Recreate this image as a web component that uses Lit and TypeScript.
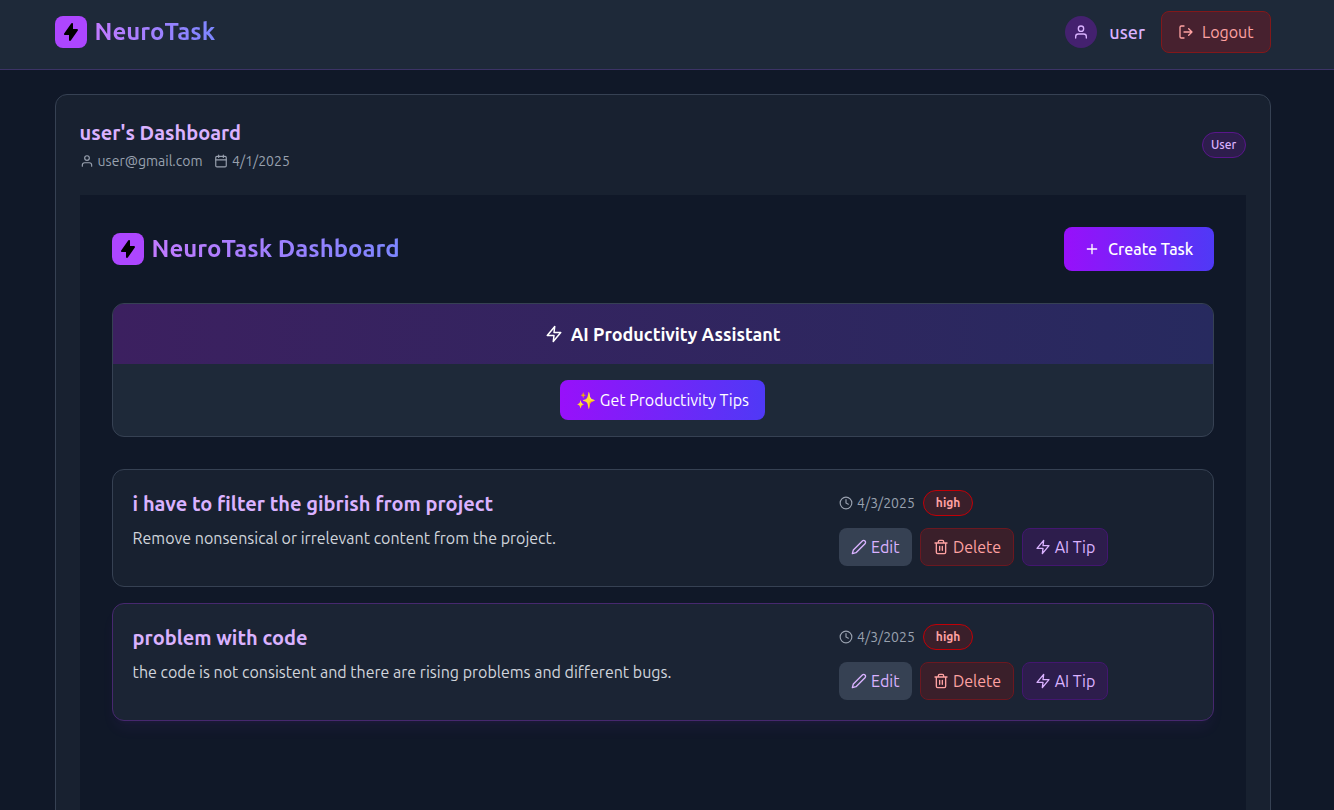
import { LitElement, html, css, svg } from "lit";
import { customElement, property } from "lit/decorators.js";

const icons: Record<string, unknown> = {
  user: svg`<path d="M20 21v-2a4 4 0 0 0-4-4H8a4 4 0 0 0-4 4v2"/><circle cx="12" cy="7" r="4"/>`,
  calendar: svg`<rect x="3" y="4" width="18" height="18" rx="2"/><path d="M16 2v4M8 2v4M3 10h18"/>`,
  logout: svg`<path d="M9 21H5a2 2 0 0 1-2-2V5a2 2 0 0 1 2-2h4M16 17l5-5-5-5M21 12H9"/>`,
  plus: svg`<path d="M12 5v14M5 12h14"/>`,
  zap: svg`<path d="M13 2 3 14h9l-1 8 10-12h-9l1-8z"/>`,
  clock: svg`<circle cx="12" cy="12" r="10"/><path d="M12 6v6l4 2"/>`,
  edit: svg`<path d="M17 3a2.828 2.828 0 1 1 4 4L7.500 20.500 2 22l1.500-5.500L17 3z"/>`,
  trash: svg`<path d="M3 6h18M19 6v14a2 2 0 0 1-2 2H7a2 2 0 0 1-2-2V6m3 0V4a2 2 0 0 1 2-2h4a2 2 0 0 1 2 2v2M10 11v6M14 11v6"/>`,
};

@customElement("line-icon")
class LineIcon extends LitElement {
  @property() name = "zap";
  static styles = css`
    :host { display: block; flex: none; width: 16px; height: 16px; }
    svg { display: block; width: 100%; height: 100%; fill: none; stroke: currentColor; stroke-width: 2; stroke-linecap: round; stroke-linejoin: round; }
  `;
  render() {
    return html`<svg viewBox="0 0 24 24">${icons[this.name]}</svg>`;
  }
}

@customElement("brand-mark")
class BrandMark extends LitElement {
  static styles = css`
    :host { display: flex; flex: none; width: 32px; height: 32px; border-radius: 8px; background: #ad46ff; align-items: center; justify-content: center; }
    svg { width: 20px; height: 20px; display: block; }
  `;
  render() {
    return html`<svg viewBox="0 0 20 20"><path fill="#000" fill-rule="evenodd" clip-rule="evenodd" d="M11.300 1.046A1 1 0 0112 2v5h4a1 1 0 01.820 1.573l-7 10A1 1 0 018 18v-5H4a1 1 0 01-.820-1.573l7-10a1 1 0 011.120-.380z"/></svg>`;
  }
}

const tasks = [
  { title: "i have to filter the gibrish from project", text: "Remove nonsensical or irrelevant content from the project.", date: "4/3/2025", level: "high", hot: false },
  { title: "problem with code", text: "the code is not consistent and there are rising problems and different bugs.", date: "4/3/2025", level: "high", hot: true },
];

@customElement("app-root")
class AppRoot extends LitElement {
  static styles = css`
    :host { display: block; height: 810px; overflow: hidden; background: #101828; color: #fff; font: 400 16px/24px Ubuntu, "Noto Sans", sans-serif; }
    * { box-sizing: border-box; }
    h1, h2, h3, p { margin: 0; white-space: nowrap; }
    span { white-space: nowrap; }
    .bar { height: 70px; background: #1e2939; border-bottom: 1px solid #3c3366; padding: 11px 63.4px 0 54.6px; display: flex; justify-content: space-between; align-items: flex-start; }
    .row { display: flex; align-items: center; }
    .brand { gap: 8px; height: 42px; }
    .grad { font-size: 24px; line-height: 32px; font-weight: 700; color: transparent; background: linear-gradient(90deg, #c27aff, #7c86ff); background-clip: text; -webkit-background-clip: text; }
    .avatar { width: 32px; height: 32px; border-radius: 50%; background: #44216f; color: #dab2ff; display: grid; place-items: center; margin-right: 12px; }
    .who { font-size: 18px; font-weight: 500; color: #dab2ff; margin-right: 16px; }
    .logout { width: 109.600px; height: 42px; border: 1px solid #82181a; border-radius: 8px; background: #47212f; color: #ffa2a2; padding-left: 16px; gap: 8px; }
    .panel { margin: 24px 63.4px 0 54.6px; height: 800px; border: 1px solid #364153; border-radius: 12px; background: #182130; padding: 24px; }
    .top { height: 76px; justify-content: space-between; align-items: flex-start; }
    .name { font-size: 20px; line-height: 28px; font-weight: 600; color: #dab2ff; }
    .meta { color: #99a1af; font-size: 14px; line-height: 20px; margin-top: 4px; gap: 4px; }
    .meta line-icon { width: 14px; height: 14px; }
    .mail { margin-right: 7.600px; }
    .role { margin-top: 13px; width: 44px; height: 26px; border: 1px solid #59168b; border-radius: 13px; background: #2d1d4c; color: #dab2ff; font-size: 12px; font-weight: 500; justify-content: center; }
    .inner { background: #101828; height: 700px; padding: 32px; }
    .head { height: 44px; justify-content: space-between; }
    .create { width: 149.600px; height: 44px; border-radius: 8px; background: linear-gradient(90deg, #9810fa, #4f39f6); font-weight: 500; padding-left: 20px; gap: 8px; }
    .assist { margin-top: 32px; height: 134px; border: 1px solid #364153; border-radius: 12px; overflow: hidden; background: #1e2939; display: flex; flex-direction: column; align-items: center; }
    .ahead { width: 100%; height: 60px; background: linear-gradient(90deg, #3c2060, #272a5f); justify-content: center; gap: 8px; font-size: 18px; font-weight: 600; }
    .ahead line-icon { width: 18px; height: 18px; }
    .tips { margin-top: 16px; height: 40px; border-radius: 8px; background: linear-gradient(90deg, #9810fa, #4f39f6); padding: 0 16px; color: #fff; }
    .task { margin-top: 16px; height: 118px; border: 1px solid #364153; border-radius: 12px; background: #182130; padding: 20px; display: grid; grid-template-columns: 706.5px 1fr; }
    .first { margin-top: 32px; }
    .hot { background: #1b2434; border-color: #47286f; box-shadow: 0 10px 15px -3px rgba(173, 70, 255, .06), 0 4px 6px -4px rgba(173, 70, 255, .06); }
    .text { margin-top: 8px; color: #d1d5dc; line-height: 24px; }
    .when { height: 26px; color: #99a1af; font-size: 14px; gap: 4px; }
    .when line-icon { width: 14px; height: 14px; }
    .date { width: 58px; margin-right: 4px; }
    .level { width: 50px; height: 26px; border: 1px solid #c10007; border-radius: 13px; background: #3a1f2a; color: #ffa2a2; font-size: 12px; font-weight: 600; justify-content: center; }
    .acts { gap: 8px; margin-top: 12px; }
    .btn { height: 38px; border: 1px solid transparent; border-radius: 8px; padding-left: 12px; gap: 4px; }
    .edit { width: 72.800px; background: #364153; color: #dab2ff; border: 0; }
    .del { width: 93.800px; background: #3a1f2a; border-color: #6b1820; color: #ffa2a2; }
    .ai { width: 86px; background: #2d1d4c; border-color: #431670; color: #dab2ff; }
  `;
  render() {
    return html`
      <header class="bar">
        <div class="row brand"><brand-mark></brand-mark><h1 class="grad">NeuroTask</h1></div>
        <div class="row">
          <div class="avatar"><line-icon name="user"></line-icon></div>
          <span class="who">user</span>
          <div class="row logout"><line-icon name="logout"></line-icon><span>Logout</span></div>
        </div>
      </header>
      <main class="panel">
        <div class="row top">
          <div>
            <h2 class="name">user's Dashboard</h2>
            <div class="row meta"><line-icon name="user"></line-icon><span class="mail">user@gmail.com</span><line-icon name="calendar"></line-icon><span class="date">4/1/2025</span></div>
          </div>
          <div class="row role">User</div>
        </div>
        <section class="inner">
          <div class="row head">
            <div class="row brand"><brand-mark></brand-mark><h2 class="grad">NeuroTask Dashboard</h2></div>
            <div class="row create"><line-icon name="plus"></line-icon><span>Create Task</span></div>
          </div>
          <div class="assist">
            <div class="row ahead"><line-icon name="zap"></line-icon><span>AI Productivity Assistant</span></div>
            <div class="row tips"><span>✨ Get Productivity Tips</span></div>
          </div>
          ${tasks.map((t, i) => html`
            <article class="task ${i === 0 ? "first" : ""} ${t.hot ? "hot" : ""}">
              <div><h3 class="name">${t.title}</h3><p class="text">${t.text}</p></div>
              <div>
                <div class="row when"><line-icon name="clock"></line-icon><span class="date">${t.date}</span><div class="row level">${t.level}</div></div>
                <div class="row acts">
                  <div class="row btn edit"><line-icon name="edit"></line-icon><span>Edit</span></div>
                  <div class="row btn del"><line-icon name="trash"></line-icon><span>Delete</span></div>
                  <div class="row btn ai"><line-icon name="zap"></line-icon><span>AI Tip</span></div>
                </div>
              </div>
            </article>`)}
        </section>
      </main>`;
  }
}
